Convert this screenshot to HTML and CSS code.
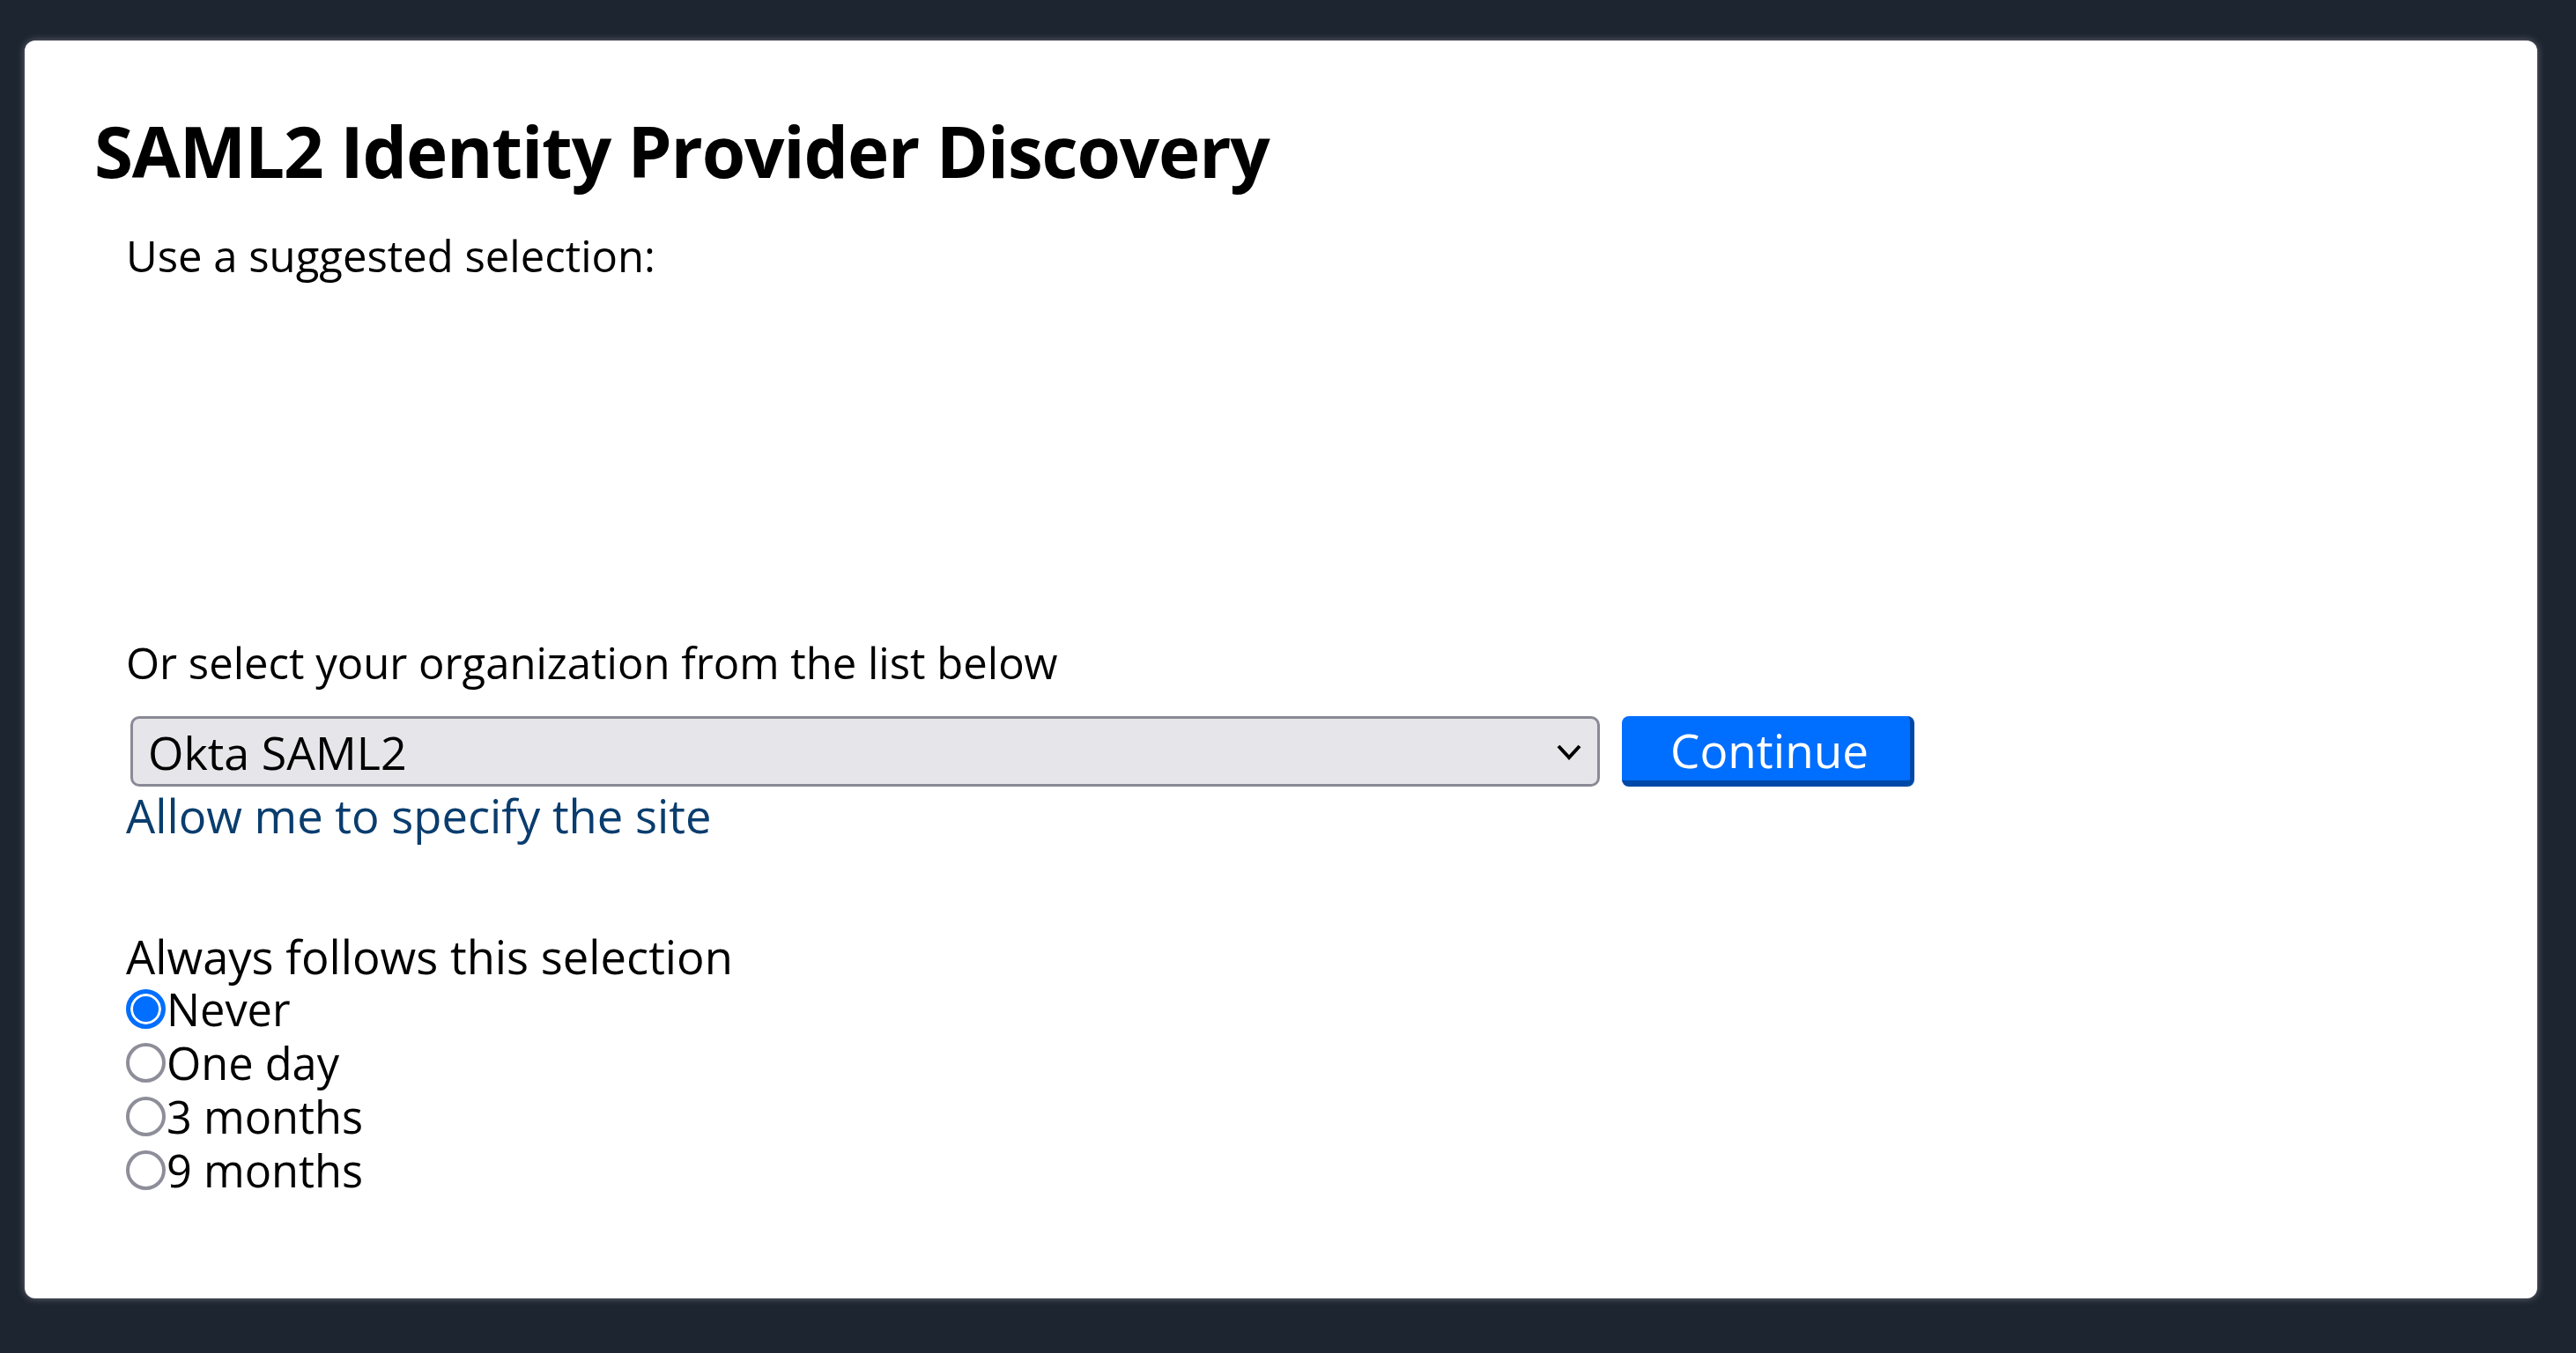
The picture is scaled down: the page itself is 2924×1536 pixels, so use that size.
FILE: index.html
```html
<!DOCTYPE html>
<html lang="en">
<head>
<meta charset="utf-8">
<title>SAML2 Identity Provider Discovery</title>
<link rel="stylesheet" href="styles.css">
</head>
<body>
<main class="card">
  <h1 class="title">SAML2 Identity Provider Discovery</h1>
  <div class="content">
    <p class="line">Use a suggested selection:</p>
    <div class="suggested"></div>
    <p class="line">Or select your organization from the list below</p>
    <form class="chooser">
      <div class="select-wrap">
        <select class="idp-select">
          <option>Okta SAML2</option>
        </select>
        <svg class="chevron" viewBox="0 0 28 18" width="28" height="18" aria-hidden="true"><path d="M2 2 L14 15 L26 2" fill="none" stroke="#000" stroke-width="4"/></svg>
      </div>
      <button type="button" class="continue">Continue</button>
    </form>
    <a class="specify" href="#">Allow me to specify the site</a>
    <p class="line always">Always follows this selection</p>
    <label class="radio-row"><input type="radio" name="remember" class="radio" checked><span class="radio-text">Never</span></label>
    <label class="radio-row"><input type="radio" name="remember" class="radio"><span class="radio-text">One day</span></label>
    <label class="radio-row"><input type="radio" name="remember" class="radio"><span class="radio-text">3 months</span></label>
    <label class="radio-row"><input type="radio" name="remember" class="radio"><span class="radio-text">9 months</span></label>
  </div>
</main>
</body>
</html>
```
FILE: styles.css
```css
html, body {
  margin: 0;
  padding: 0;
}
body {
  background: #1d2530;
  font-family: "Open Sans", "Noto Sans", sans-serif;
  color: #000;
  height: 1536px;
  overflow: hidden;
}
.card {
  box-sizing: border-box;
  margin: 46px 44px 0 28px;
  height: 1428px;
  background: #fff;
  border-radius: 12px;
  box-shadow: 0 0 8px rgba(170, 170, 180, 0.55);
  padding: 77px 0 0 79px;
}
.title {
  margin: 0;
  font-size: 80px;
  line-height: 96px;
  font-weight: 700;
  letter-spacing: -1.2px;
}
.content {
  padding-left: 36px;
  margin-top: 41px;
  font-size: 49px;
  line-height: 61px;
}
.line {
  margin: 0;
}
.suggested {
  height: 401px;
}
.chooser {
  display: flex;
  align-items: center;
  gap: 25px;
  margin: 30px 0 0 5px;
}
.select-wrap {
  position: relative;
  width: 1668px;
  height: 80px;
}
.idp-select {
  appearance: none;
  -webkit-appearance: none;
  box-sizing: border-box;
  width: 100%;
  height: 80px;
  margin: 0;
  padding: 0 60px 0 17px;
  background: #e6e6ea;
  border: 3px solid #8a8a96;
  border-radius: 10px;
  font-family: "Open Sans", "Noto Sans", sans-serif;
  font-size: 52px;
  color: #000;
}
.chevron {
  position: absolute;
  right: 21px;
  top: 32px;
}
.continue {
  box-sizing: border-box;
  width: 332px;
  height: 80px;
  margin: 0;
  padding: 4px 0 0 8px;
  background: #006efe;
  color: #fff;
  border: 0;
  border-right: 5px solid #0048a8;
  border-bottom: 7px solid #0048a8;
  border-radius: 8px;
  font-family: "Open Sans", "Noto Sans", sans-serif;
  font-size: 53px;
  line-height: 1;
}
.specify {
  display: block;
  color: #0a3d6e;
  text-decoration: none;
  width: max-content;
  font-size: 52.5px;
  margin-top: 2px;
}
.always {
  margin-top: 99px;
  font-size: 52.5px;
}
.radio-row {
  display: flex;
  align-items: center;
  height: 61px;
  font-size: 50.5px;
}
.radio-text {
  line-height: 1;
}
.radio {
  appearance: none;
  -webkit-appearance: none;
  box-sizing: border-box;
  width: 45px;
  height: 45px;
  margin: -2px 1px 0 0;
  border: 4px solid #8e8e9a;
  border-radius: 50%;
  background: #fff;
  flex: none;
}
.radio:checked {
  border: 5px solid #006efe;
  background: #006efe;
  box-shadow: inset 0 0 0 3px #fff;
}
```
